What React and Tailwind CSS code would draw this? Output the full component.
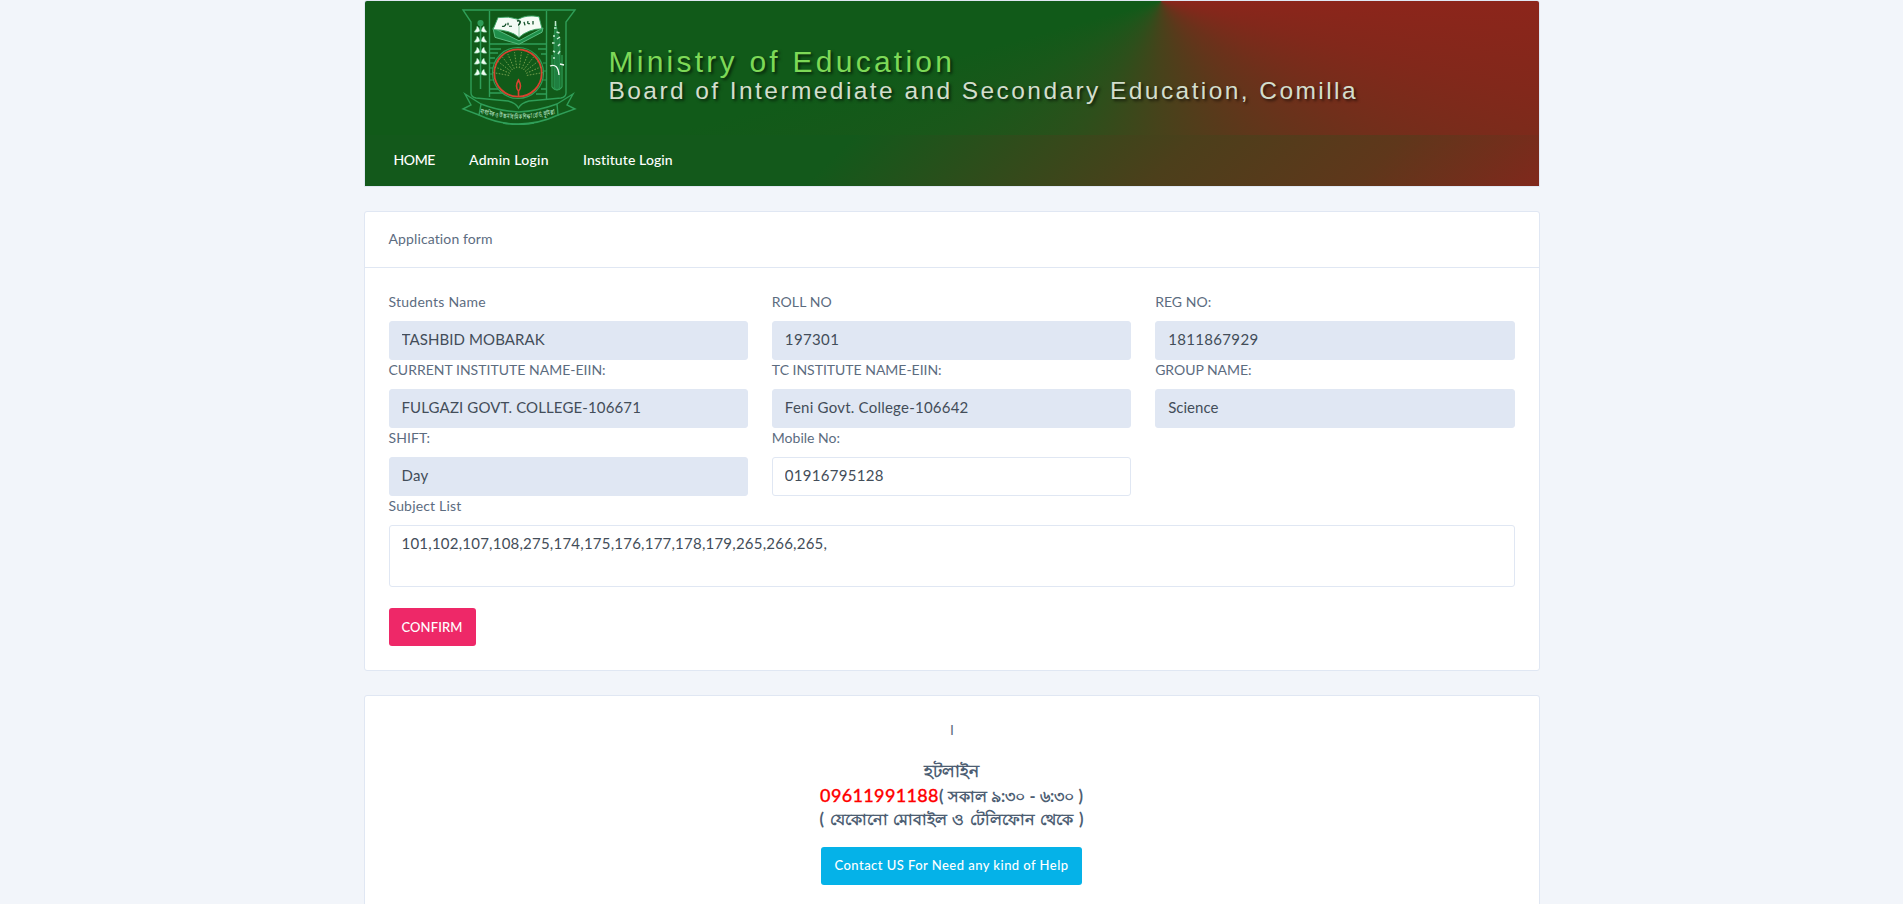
import React from 'react';

function Emblem() {
  const leaves = [27, 37, 48, 59, 70];
  const rays = [-80, -66, -52, -38, -24, -8, 8, 24, 38, 52, 66, 80];
  return (
    <svg viewBox="0 0 120 120" className="h-[120px] w-[120px] shrink-0" fill="none" stroke="#2f9e58" strokeWidth="1.4">
      <path d="M4 5H116L107 17V88Q107 92 102 93L70 96Q62 98 59.500 103Q57 98 49 96L17 93Q12 92 12 88V17Z" />
      <path d="M30.500 6V92M87.500 6V94M30.500 39H87.500M31 44H42M31 48H39M31 53H36M31 84H39M31 88H44M79 44H87M82 49H87M82 84H87M77 89H87" />
      <path d="M31 58H35M31 63H34M31 69H34M31 75H35M84 58H87M85 66H87M84 75H87" strokeWidth="1" />
      <circle cx="59" cy="68" r="25.500" strokeWidth="1.2" />
      <g transform="matrix(1 0 0 0.86 0 4)">
        <path d="M34 22L36 33L60 41L83 27L84 22L60 37Z" fill="#1f8f4a" stroke="#5cbf83" strokeWidth="1" />
        <path d="M39 10Q50 8 59 12Q68 6 80 9L83 23Q70 23 60 33Q51 24 34 24Z" fill="#f4fbf5" stroke="#3aa263" strokeWidth="1" />
        <path d="M60 20V32" stroke="#8cc9a2" strokeWidth="1" />
        <path d="M43 20q3 1 4-3M49 19v-3M50 20h3M65 15l1 4M69 14q-1 4 2 3M74 18v-4" stroke="#14502a" strokeWidth="1.300" />
        <path d="M58 14q4-1 3 2t-2 3" stroke="#14502a" strokeWidth="1.800" />
      </g>
      <circle cx="59" cy="68" r="23.700" stroke="#d8432f" strokeWidth="1.800" />
      {rays.map((a) => (
        <path key={a} d="M59 63V47" transform={`rotate(${a} 59 72)`} stroke="#78a04e" strokeWidth="0.9" strokeDasharray="1.600 1.400" />
      ))}
      <path d="M59.500 91V86M59.500 86q-4-4 0-11q4 7 0 11Z" stroke="#d8432f" strokeWidth="1.600" />
      <path d="M21.500 20V84" strokeWidth="1.500" />
      <circle cx="21.500" cy="18" r="2.400" fill="#2f9e58" />
      {leaves.map((y) => (
        <path
          key={y}
          d={`M21 ${y - 1}q-1-4-3-5q0 3-3 6q4 1 6-1ZM22 ${y - 1}q1-4 3-5q0 3 3 6q-4 1-6-1Z`}
          fill="#f0faf2"
          stroke="#5cbf83"
          strokeWidth="0.5"
        />
      ))}
      <path d="M95 82V32L96.500 17L99 30L101 34V82Q98 88 95 82Z" fill="#1f7f40" strokeWidth="0.800" />
      <path d="M93 82V50M103 82V50M93 82q5 6 10 0" strokeWidth="1.200" />
      <path
        d="M96.500 16v5M95 23h2.500M97.500 27l3 1M94 31h2M98 34l3-2M93 38h2.500M99 41l2-2M94 46l2 1M99 49l2-3M94 53h2"
        stroke="#c4ead0"
        strokeWidth="1.500"
      />
      <path d="M91 61q8-3 9 9M101 59l4 1" stroke="#f0faf2" strokeWidth="1.300" />
      <path d="M22 99Q40 106 59.500 107Q79 106 98 99L99 110Q80 119 59.500 119Q39 119 20 110Z" />
      <path d="M22 99L6 89L12 100L4 104L20 110M98 99L114 89L108 100L116 104L99 110M44 118Q59 121 75 118" />
      <path id="ribbon" d="M21 108Q59 119.500 99 108" stroke="none" />
      <text fill="#a5dab5" stroke="none" fontSize="6.500" fontWeight="700" fontFamily="Lato, sans-serif">
        <textPath href="#ribbon" textLength="76" lengthAdjust="spacingAndGlyphs">
          মাধ্যমিক ও উচ্চ মাধ্যমিক শিক্ষা বোর্ড, কুমিল্লা
        </textPath>
      </text>
    </svg>
  );
}

const fields = [
  { label: 'Students Name', lt: 'tracking-[0.25px]', value: 'TASHBID MOBARAK', vt: 'tracking-[0.1px]' },
  { label: 'ROLL NO', lt: 'tracking-[0.08px]', value: '197301', vt: 'tracking-[0.36px]' },
  { label: 'REG NO:', lt: 'tracking-[0.03px]', value: '1811867929', vt: 'tracking-[0.33px]' },
  { label: 'CURRENT INSTITUTE NAME-EIIN:', lt: 'tracking-[0.01px]', value: 'FULGAZI GOVT. COLLEGE-106671', vt: 'tracking-[0.13px]' },
  { label: 'TC INSTITUTE NAME-EIIN:', lt: 'tracking-[-0.02px]', value: 'Feni Govt. College-106642', vt: 'tracking-[0.23px]' },
  { label: 'GROUP NAME:', lt: 'tracking-[-0.035px]', value: 'Science', vt: 'tracking-[0.03px]' },
  { label: 'SHIFT:', lt: 'tracking-[0.07px]', value: 'Day', vt: 'tracking-[0.3px]' },
  { label: 'Mobile No:', lt: 'tracking-[0.01px]', value: '01916795128', vt: 'tracking-[0.3px]', editable: true },
];

function Field({ label, lt, value, vt, editable }) {
  return (
    <div>
      <label className={`mb-2.5 block text-sm leading-[19px] ${lt}`}>{label}</label>
      <input
        readOnly={!editable}
        defaultValue={value}
        className={`block h-[39px] w-full rounded-[3px] border border-[#e0e7f3] px-3 pb-[3px] text-[15px] text-[#434d59] outline-none ${vt} ${
          editable ? 'bg-white' : 'bg-[#e0e7f3]'
        }`}
      />
    </div>
  );
}

export default function App() {
  return (
    <div className="h-[904px] overflow-hidden bg-[#f2f5fa] font-['Lato','Noto_Sans',sans-serif] text-sm text-[#5c6c7f]">
      <div className="mx-auto w-[1176px]">
        <header className="overflow-hidden rounded-t-[3px] border border-[#e0e7f3] text-white">
          <div className="flex h-[134px] bg-[conic-gradient(from_90deg_at_796px_0px,#8c251b_0deg,#82281b_14deg,#6c311b_38deg,#583a1b_65deg,#46431b_92deg,#2d4f1b_122deg,#1b571a_148deg,#115a19_165deg,#115a19_340deg,#8c251b_360deg)] pt-1 pl-[94px]">
            <Emblem />
            <div className="flex flex-col pt-10 pl-[27px] font-['Liberation_Sans',Arial,sans-serif] [text-shadow:2px_2px_3px_rgba(0,0,0,0.6)]">
              <span className="pl-[3px] text-[30px] leading-[33px] tracking-[3.25px] whitespace-nowrap text-[#7dd957]">Ministry of Education</span>
              <span className="pl-[3px] text-[24.5px] leading-[26px] tracking-[2.43px] whitespace-nowrap text-[#d3decd]">
                Board of Intermediate and Secondary Education, Comilla
              </span>
            </div>
          </div>
          <nav className="flex h-[51px] gap-[34px] bg-[linear-gradient(135deg,#13591b_0%,#13591b_40%,#4c3f1b_68%,#5f371b_85%,#80281c_100%)] pt-[15px] pl-[29px] leading-5 font-medium">
            <a className="tracking-[-0.4px]">HOME</a>
            <a className="tracking-[0.28px]">Admin Login</a>
            <a className="tracking-[0.1px]">Institute Login</a>
          </nav>
        </header>

        <section className="mt-[24px] rounded-[3px] border border-[#e0e7f3] bg-white">
          <h1 className="border-b border-[#e0e7f3] px-6 pt-4 pb-[18px] leading-[21px] tracking-[0.12px]">Application form</h1>
          <form className="p-6">
            <div className="grid grid-cols-3 gap-x-6">
              {fields.map((f) => (
                <Field key={f.label} {...f} />
              ))}
            </div>
            <label className="mb-2.5 block leading-[19px] tracking-[0.18px]">Subject List</label>
            <textarea
              defaultValue="101,102,107,108,275,174,175,176,177,178,179,265,266,265,"
              className="block h-[62px] w-full resize-none rounded-[3px] border border-[#e0e7f3] px-3 py-[6px] text-[15px] leading-[22px] tracking-[0.224px] text-[#434d59] outline-none"
            />
            <button type="button" className="mt-[21px] h-[38px] w-[87px] rounded-[3px] bg-[#ee2868] text-[13px] font-medium tracking-[0.12px] text-white">
              CONFIRM
            </button>
          </form>
        </section>

        <footer className="mt-6 flex h-[260px] flex-col items-center rounded-[3px] border border-[#e0e7f3] bg-white pt-[23px]">
          <p className="pl-px leading-[21px]">I</p>
          <div className="mt-[19px] text-center font-bold whitespace-nowrap text-[#4d5e73]">
            <p className="text-[17px] leading-[24px]">হটলাইন</p>
            <p className="text-[16.4px] leading-[25px] [word-spacing:0.3px]">
              <span className="text-[18px] font-medium tracking-[0.36px] text-[#ff0000] [-webkit-text-stroke:0.3px_#ff0000]">09611991188</span>( সকাল ৯:৩০ - ৬:৩০ )
            </p>
            <p className="text-[16.4px] leading-[22px] [word-spacing:1.5px]">( যেকোনো মোবাইল ও টেলিফোন থেকে )</p>
          </div>
          <button type="button" className="mt-[17px] h-[38px] w-[261px] rounded-[3px] bg-[#05b2e8] pb-px text-[13px] font-medium tracking-[0.46px] text-white">
            Contact US For Need any kind of Help
          </button>
        </footer>
      </div>
    </div>
  );
}
